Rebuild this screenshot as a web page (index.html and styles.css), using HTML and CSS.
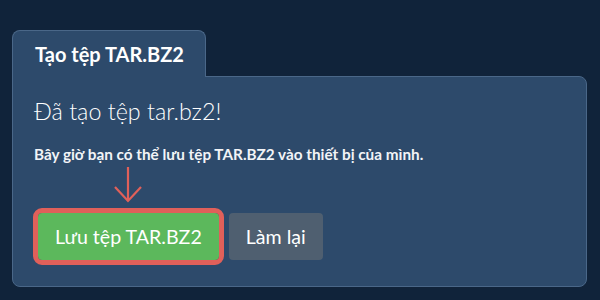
FILE: index.html
```html
<!DOCTYPE html>
<html lang="vi">
<head>
  <meta charset="UTF-8">
  <title>Tạo tệp TAR.BZ2</title>
  <link rel="stylesheet" href="styles.css">
</head>
<body>

  <div class="box">
    <div class="tabs">
      <div class="tab">Tạo tệp TAR.BZ2</div>
    </div>

    <div class="panel">
      <h2>Đã tạo tệp tar.bz2!</h2>
      <p>Bây giờ bạn có thể lưu tệp TAR.BZ2 vào thiết bị của mình.</p>

      <div class="actions">
        <div class="save-wrap">
          <!-- mũi tên chỉ vào nút lưu -->
          <svg class="arrow" width="30" height="38" viewBox="0 0 30 38">
            <path d="M15 1 V35 M2 21 L15 35 L28 21" fill="none" stroke="#e0605a" stroke-width="2.2"/>
          </svg>
          <button type="button" class="btn btn-save">Lưu tệp TAR.BZ2</button>
        </div>
        <button type="button" class="btn btn-reset">Làm lại</button>
      </div>
    </div>
  </div>

</body>
</html>
```

FILE: styles.css
```css
* { box-sizing: border-box; margin: 0; padding: 0; font-family: 'Lato', 'Noto Sans', sans-serif; }
html, body { overflow: hidden; }
body { background: #10233a; color: #fff; padding: 30px 13px 0 12px; }

.box { width: 575px; }

/* Tab */
.tabs { display: flex; }
.tab {
  width: 194px; height: 47px; padding: 11px 0 0 22px;
  background: #2d4a6b; border: 1px solid #4a6788; border-bottom: none;
  border-radius: 8px 8px 0 0; margin-bottom: -1px; position: relative; z-index: 1;
  font-size: 20px; font-weight: bold; line-height: 24px; white-space: nowrap;
}

/* Panel */
.panel {
  background: #2d4a6b; border: 1px solid #4a6788; border-radius: 0 8px 8px 8px;
  height: 211px; padding: 20px 21px 0 21px;
}
.panel h2 { font-size: 23.3px; font-weight: 300; line-height: 28px; white-space: nowrap; }
.panel p { font-size: 15.3px; font-weight: bold; margin-top: 20px; white-space: nowrap; color: #f2f4f7; }

.actions { display: flex; gap: 10px; margin: 50px 0 0 4px; }
.save-wrap { position: relative; }
.arrow { position: absolute; left: 50%; margin-left: -15px; bottom: 56px; }

.btn {
  height: 47px; border: none; border-radius: 4px; color: #fff;
  font-size: 19.6px; padding: 0 17px; cursor: pointer; white-space: nowrap;
}
.btn-save { background: #5cb85c; outline: 5px solid #e0605a; padding: 0 17px; }
.btn-reset { background: #4f5f70; }
```
